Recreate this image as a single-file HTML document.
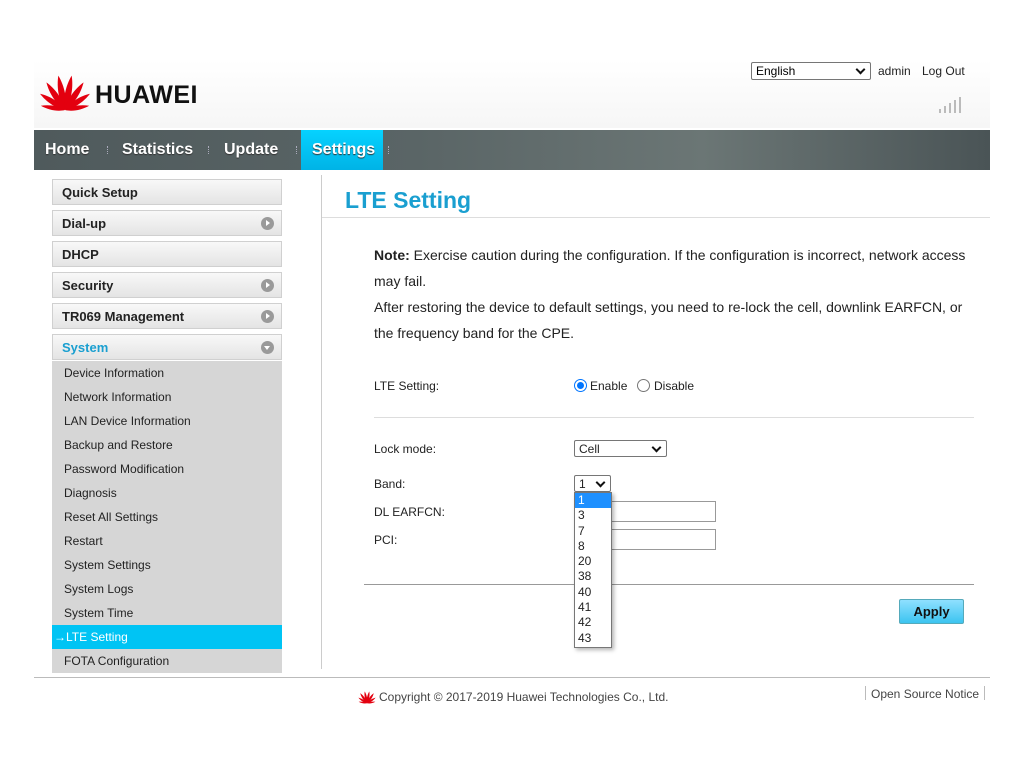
<!DOCTYPE html>
<html><head><meta charset="utf-8"><style>
*{margin:0;padding:0;box-sizing:border-box}
body{width:1024px;height:768px;background:#fff;font-family:"Liberation Sans",Arial,sans-serif;position:relative;overflow:hidden;color:#222}
.a{position:absolute}
.hdr{left:34px;top:60px;width:956px;height:68px;background:linear-gradient(#fff,#f6f6f6)}
.nav{left:34px;top:130px;width:956px;height:40px;background:linear-gradient(90deg,#4f5a5c,#5a6566 40%,#6b7675 70%,#4a5456)}
.nav span{position:absolute;top:11px;color:#fff;font-weight:bold;font-size:16px;text-shadow:0 1px 1px #333}
.dot{position:absolute;top:16px;width:1px;height:8px;border-left:1px dotted #aab}
.m{left:52px;width:230px;height:26px;border:1px solid #d0d0d0;background:linear-gradient(#f8f8f8,#e4e4e4);font-weight:bold;font-size:13px;padding:5px 0 0 9px;color:#222}
.ci{position:absolute;right:7px;top:6px;width:13px;height:13px;border-radius:50%;background:#9a9a9a}
.ci:after{content:"";position:absolute;left:5px;top:3px;border-left:4px solid #fff;border-top:3.5px solid transparent;border-bottom:3.5px solid transparent}
.cd:after{left:3px;top:5px;border-top:4px solid #fff;border-left:3.5px solid transparent;border-right:3.5px solid transparent;border-bottom:0}
.sub{left:52px;width:230px;background:#d6d6d6;top:361px;height:312px}
.sub div{height:24px;font-size:12px;padding:5px 0 0 12px;color:#222}
.t{font-size:14px;color:#222}
.l{font-size:12px;color:#222}
.sel{border:1px solid #767676;border-radius:2px;background:#fff;font-size:12px;padding:1px 4px;height:17px}
.sel:after{content:"";position:absolute;right:6px;top:3px;width:5px;height:5px;border-right:2px solid #111;border-bottom:2px solid #111;transform:rotate(45deg)}
.inp{border:1px solid #999;background:#fff;height:21px}
.dd{left:574px;top:492px;width:38px;height:156px;background:#fff;border:1px solid #777;box-shadow:2px 2px 4px rgba(0,0,0,.3);font-size:12px}
.dd div{height:15.3px;padding-left:3px;line-height:15px}
</style></head><body>
<div class="a hdr"></div>
<svg class="a" style="left:39px;top:72px" width="52" height="40" viewBox="0 0 52 40">
<defs><path id="p" d="M26 38 C21.5 28 22 14 26 3 C30 14 30.5 28 26 38Z"/></defs>
<g fill="#e3000f">
<use href="#p" transform="rotate(-11 26 38)"/>
<use href="#p" transform="rotate(11 26 38)"/>
<use href="#p" transform="rotate(-34 26 38) translate(26 38) scale(0.95) translate(-26 -38)"/>
<use href="#p" transform="rotate(34 26 38) translate(26 38) scale(0.95) translate(-26 -38)"/>
<use href="#p" transform="rotate(-57 26 38) translate(26 38) scale(0.85) translate(-26 -38)"/>
<use href="#p" transform="rotate(57 26 38) translate(26 38) scale(0.85) translate(-26 -38)"/>
<use href="#p" transform="rotate(-80 26 38) translate(26 38) scale(0.7) translate(-26 -38)"/>
<use href="#p" transform="rotate(80 26 38) translate(26 38) scale(0.7) translate(-26 -38)"/>
</g></svg>
<div class="a" style="left:95px;top:81px;font-size:25px;font-weight:bold;color:#111;letter-spacing:0.5px">HUAWEI</div>
<div class="a sel" style="left:751px;top:62px;width:120px;height:18px;font-size:12px;color:#000">English</div>
<div class="a" style="left:878px;top:64px;font-size:12px;color:#222">admin</div>
<div class="a" style="left:922px;top:64px;font-size:12px;color:#222">Log Out</div>
<svg class="a" style="left:938px;top:96px" width="28" height="18"><g fill="#bbb"><rect x="1" y="13" width="2" height="4"/><rect x="6" y="10" width="2" height="7"/><rect x="11" y="7" width="2" height="10"/><rect x="16" y="4" width="2" height="13"/><rect x="21" y="1" width="2" height="16"/></g></svg>
<div class="a nav">
<span style="left:11px">Home</span><i class="dot" style="left:73px"></i>
<span style="left:88px">Statistics</span><i class="dot" style="left:174px"></i>
<span style="left:190px">Update</span><i class="dot" style="left:262px"></i>
<div style="position:absolute;left:267px;top:0;width:82px;height:40px;background:linear-gradient(#06d2ff,#00b3e6)"></div>
<span style="left:278px">Settings</span><i class="dot" style="left:354px"></i>
</div>
<div class="a m" style="top:179px">Quick Setup</div>
<div class="a m" style="top:210px">Dial-up<i class="ci"></i></div>
<div class="a m" style="top:241px">DHCP</div>
<div class="a m" style="top:272px">Security<i class="ci"></i></div>
<div class="a m" style="top:303px">TR069 Management<i class="ci"></i></div>
<div class="a m" style="top:334px;color:#1a9fd0">System<i class="ci cd"></i></div>
<div class="a sub">
<div>Device Information</div><div>Network Information</div><div>LAN Device Information</div><div>Backup and Restore</div><div>Password Modification</div><div>Diagnosis</div><div>Reset All Settings</div><div>Restart</div><div>System Settings</div><div>System Logs</div><div>System Time</div>
<div style="background:#00c4f4;color:#fff;padding-left:2px">→LTE Setting</div>
<div>FOTA Configuration</div>
</div>
<div class="a" style="left:321px;top:175px;width:1px;height:494px;background:#ccc"></div>
<div class="a" style="left:345px;top:187px;font-size:23px;font-weight:bold;color:#1a9fd0">LTE Setting</div>
<div class="a" style="left:322px;top:217px;width:668px;height:1px;background:#ddd"></div>
<div class="a t" style="left:374px;top:242px;width:600px;line-height:26px"><b>Note:</b> Exercise caution during the configuration. If the configuration is incorrect, network access may fail.<br>After restoring the device to default settings, you need to re-lock the cell, downlink EARFCN, or the frequency band for the CPE.</div>
<div class="a l" style="left:374px;top:379px">LTE Setting:</div>
<div class="a" style="left:574px;top:379px;width:13px;height:13px;border-radius:50%;border:1px solid #0075ff"><div style="position:absolute;left:2px;top:2px;width:7px;height:7px;border-radius:50%;background:#0075ff"></div></div>
<div class="a l" style="left:590px;top:379px">Enable</div>
<div class="a" style="left:637px;top:379px;width:13px;height:13px;border-radius:50%;border:1px solid #767676"></div>
<div class="a l" style="left:654px;top:379px">Disable</div>
<div class="a" style="left:374px;top:417px;width:600px;height:1px;background:#ddd"></div>
<div class="a l" style="left:374px;top:442px">Lock mode:</div>
<div class="a sel" style="left:574px;top:440px;width:93px">Cell</div>
<div class="a l" style="left:374px;top:477px">Band:</div>
<div class="a sel" style="left:574px;top:475px;width:37px">1</div>
<div class="a l" style="left:374px;top:505px">DL EARFCN:</div>
<div class="a inp" style="left:574px;top:501px;width:142px"></div>
<div class="a l" style="left:374px;top:533px">PCI:</div>
<div class="a inp" style="left:574px;top:529px;width:142px"></div>
<div class="a" style="left:364px;top:584px;width:610px;height:1px;background:#999"></div>
<div class="a dd"><div style="background:#1e90ff;color:#fff">1</div><div>3</div><div>7</div><div>8</div><div>20</div><div>38</div><div>40</div><div>41</div><div>42</div><div>43</div></div>
<div class="a" style="left:899px;top:599px;width:65px;height:25px;border:1px solid #5ab;border-radius:2px;background:linear-gradient(#8fe0ff,#3cc4f0);font-weight:bold;font-size:13px;text-align:center;line-height:23px;color:#111">Apply</div>
<div class="a" style="left:34px;top:677px;width:956px;height:1px;background:#bbb"></div>
<svg class="a" style="left:358px;top:690px" width="18" height="14" viewBox="0 0 52 40"><g fill="#e3000f"><use href="#p" transform="rotate(-11 26 38)"/><use href="#p" transform="rotate(11 26 38)"/><use href="#p" transform="rotate(-34 26 38)"/><use href="#p" transform="rotate(34 26 38)"/><use href="#p" transform="rotate(-57 26 38) translate(26 38) scale(0.85) translate(-26 -38)"/><use href="#p" transform="rotate(57 26 38) translate(26 38) scale(0.85) translate(-26 -38)"/><use href="#p" transform="rotate(-80 26 38) translate(26 38) scale(0.7) translate(-26 -38)"/><use href="#p" transform="rotate(80 26 38) translate(26 38) scale(0.7) translate(-26 -38)"/></g></svg>
<div class="a" style="left:379px;top:690px;font-size:12px;color:#444">Copyright © 2017-2019 Huawei Technologies Co., Ltd.</div>
<div class="a" style="left:865px;top:686px;width:1px;height:14px;background:#bbb"></div>
<div class="a" style="left:871px;top:687px;font-size:12px;color:#444">Open Source Notice</div>
<div class="a" style="left:984px;top:686px;width:1px;height:14px;background:#bbb"></div>
</body></html>
